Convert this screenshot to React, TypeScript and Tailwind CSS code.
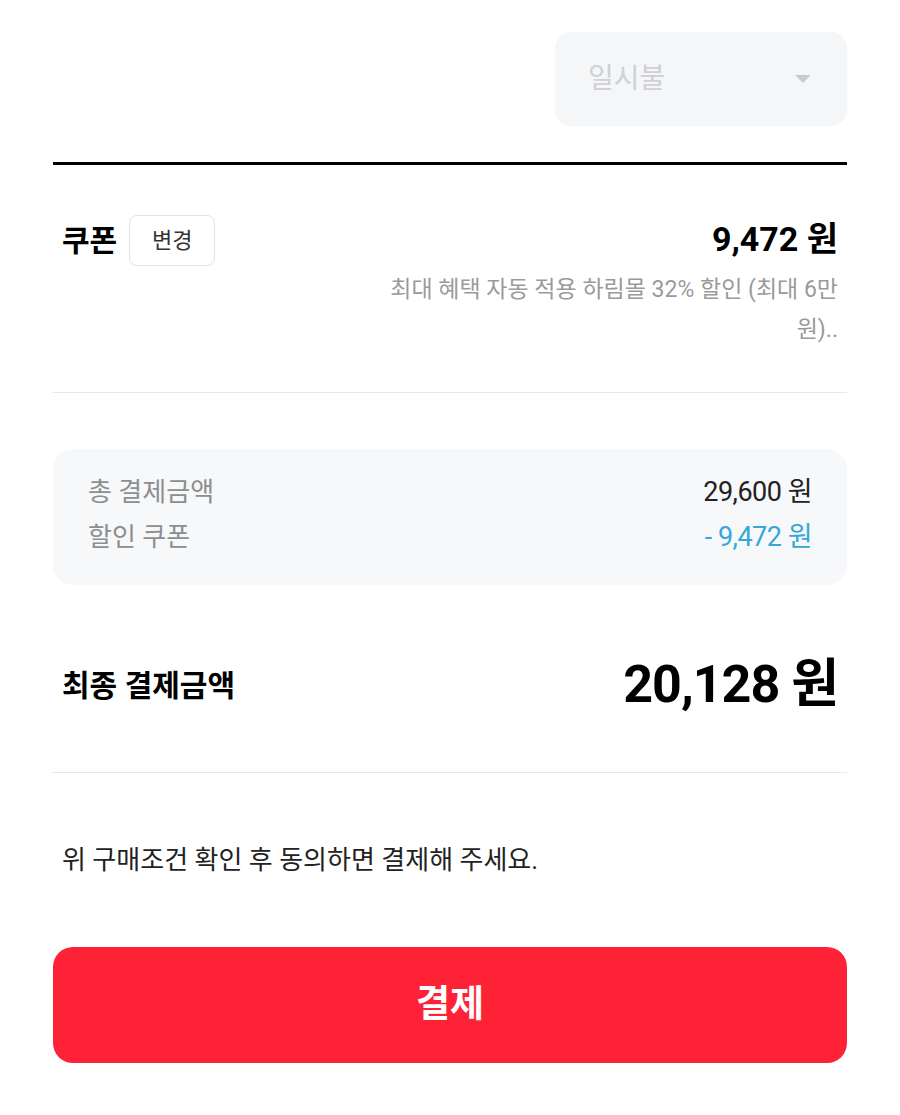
const FONT = "font-['Roboto','Noto_Sans_CJK_KR',sans-serif]";

function Row({ label, value, valueClass }: { label: string; value: string; valueClass: string }) {
  return (
    <div className="flex h-[34px] items-center justify-between">
      <span className="text-[26px] text-[#8e8e8e]">{label}</span>
      <span className={`text-[27px] tracking-[-0.5px] ${valueClass}`}>{value}</span>
    </div>
  );
}

export default function App() {
  return (
    <div className={`min-h-screen bg-white ${FONT}`}>
      <div className="mx-auto w-[794px] pt-[32px]">
        {/* 할부 선택 */}
        <div className="flex justify-end">
          <div className="flex h-[94px] w-[292px] items-center justify-between rounded-[16px] bg-[#f5f6f8] pl-[33px] pr-[36px]">
            <span className="text-[28px] text-[#cfd1d5]">일시불</span>
            <span className="h-0 w-0 border-x-[8px] border-t-[8px] border-x-transparent border-t-[#c9cbce]" />
          </div>
        </div>

        <div className="mt-[36px] h-[3px] bg-black" />

        {/* 쿠폰 */}
        <div className="flex items-start justify-between px-[9px] pt-[50px] pb-[42px]">
          <div className="flex items-center gap-[12px]">
            <span className="text-[30px] font-bold text-black">쿠폰</span>
            <button className="flex h-[51px] w-[86px] items-center justify-center rounded-[8px] border border-[#e2e2e2] text-[22px] text-[#333]">
              변경
            </button>
          </div>
          <div className="flex flex-col items-end">
            <span className="mt-[2px] text-[34px] font-bold leading-[44px] text-black">9,472 원</span>
            <p className="mt-[9px] w-[500px] text-right text-[23px] leading-[40px] text-[#9a9a9a]">
              최대 혜택 자동 적용 하림몰 32% 할인 (최대 6만
              <br />
              원)..
            </p>
          </div>
        </div>

        <div className="h-px bg-[#e8e8e8]" />

        {/* 요약 */}
        <div className="mt-[56px] flex flex-col gap-[11px] rounded-[20px] bg-[#f6f8fa] px-[35px] pt-[26px] pb-[31px]">
          <Row label="총 결제금액" value="29,600 원" valueClass="text-[#222]" />
          <Row label="할인 쿠폰" value="- 9,472 원" valueClass="text-[#36a7d8]" />
        </div>

        {/* 최종 */}
        <div className="flex items-center justify-between px-[9px] pt-[74px] pb-[61px]">
          <span className="text-[30px] font-bold text-black">최종 결제금액</span>
          <span className="text-[52px] font-bold leading-[52px] tracking-[-1px] text-black">20,128 원</span>
        </div>

        <div className="h-px bg-[#e8e8e8]" />

        <p className="mt-[69px] px-[9px] text-[26px] leading-[36px] text-[#222]">위 구매조건 확인 후 동의하면 결제해 주세요.</p>

        <button className="mt-[69px] flex h-[116px] w-full items-center justify-center rounded-[20px] bg-[#fe2236] text-[37px] font-bold text-white">
          결제
        </button>
      </div>
    </div>
  );
}
